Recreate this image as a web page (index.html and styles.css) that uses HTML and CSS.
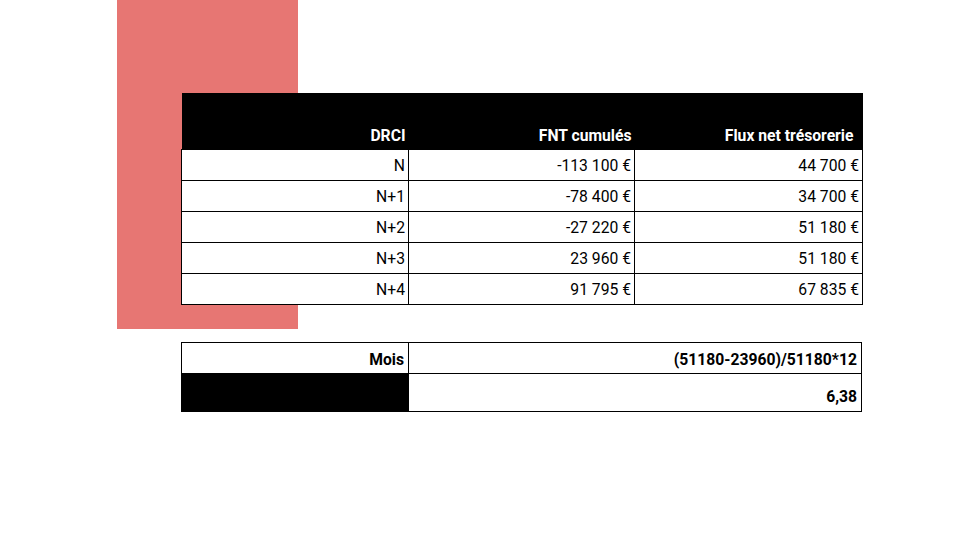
FILE: index.html
```html
<!DOCTYPE html>
<html lang="fr">
<head>
<meta charset="utf-8">
<link rel="stylesheet" href="styles.css">
</head>
<body>
<div class="slide">
  <div class="accent"></div>
  <div class="content">
    <table class="grid main">
      <colgroup><col class="c1"><col class="c2"><col class="c3"></colgroup>
      <thead>
        <tr class="head">
          <th>DRCI</th>
          <th>FNT cumulés</th>
          <th class="last">Flux net trésorerie</th>
        </tr>
      </thead>
      <tbody>
        <tr><td>N</td><td>-113&nbsp;100&nbsp;€</td><td>44&nbsp;700&nbsp;€</td></tr>
        <tr><td>N+1</td><td>-78&nbsp;400&nbsp;€</td><td>34&nbsp;700&nbsp;€</td></tr>
        <tr><td>N+2</td><td>-27&nbsp;220&nbsp;€</td><td>51&nbsp;180&nbsp;€</td></tr>
        <tr><td>N+3</td><td>23&nbsp;960&nbsp;€</td><td>51&nbsp;180&nbsp;€</td></tr>
        <tr><td>N+4</td><td>91&nbsp;795&nbsp;€</td><td>67&nbsp;835&nbsp;€</td></tr>
      </tbody>
    </table>
    <table class="grid calc">
      <colgroup><col class="c1"><col class="cw"></colgroup>
      <tbody>
        <tr class="r1"><td class="b">Mois</td><td class="b">(51180-23960)/51180*12</td></tr>
        <tr class="r2"><td class="black"></td><td class="b">6,38</td></tr>
      </tbody>
    </table>
  </div>
</div>
</body>
</html>
```
FILE: styles.css
```css
html, body {
  margin: 0;
  padding: 0;
  background: #ffffff;
}
.slide {
  position: relative;
  width: 960px;
  height: 540px;
  overflow: hidden;
  font-family: Roboto, "Liberation Sans", Arial, sans-serif;
  font-size: 15.7px;
  color: #000;
}
.accent {
  position: absolute;
  left: 117px;
  top: 0;
  width: 181px;
  height: 329px;
  background: #e77673;
}
.content {
  position: relative;
  padding: 93px 0 0 181px;
  display: flex;
  flex-direction: column;
  gap: 37px;
}
.grid {
  border-collapse: collapse;
  table-layout: fixed;
  width: 681px;
}
.c1 { width: 227px; }
.c2 { width: 226px; }
.c3 { width: 228px; }
.grid th, .grid td {
  padding: 0 3px 5px 3px;
  line-height: 18px;
  text-align: right;
  vertical-align: bottom;
  white-space: nowrap;
}
.main td {
  border: 1px solid #000;
  background: #fff;
}
.main tbody tr { height: 31.2px; }
.head { height: 56px; }
.head th {
  background: #000;
  color: #fff;
  font-weight: 700;
  border: 0;
  padding-bottom: 4px;
}
.head th.last { padding-right: 9px; }
.calc td {
  border: 1px solid #000;
  background: #fff;
}
.calc .b { font-weight: 700; padding-right: 4px; }
.calc .r1 { height: 31px; }
.calc .r1 td { padding-bottom: 4px; }
.calc .r2 { height: 38px; }
.calc td.black { background: #000; }
```
